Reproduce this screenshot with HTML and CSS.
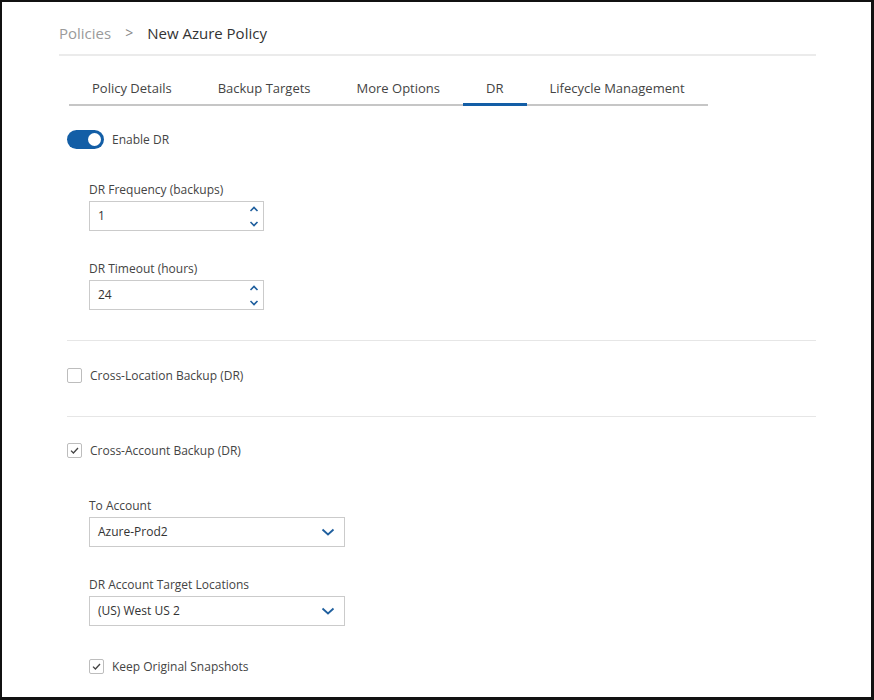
FILE: index.html
```html
<!DOCTYPE html>
<html>
<head>
<meta charset="utf-8">
<link rel="stylesheet" href="styles.css">
</head>
<body>
<div class="frame">
  <div class="breadcrumb">
    <span class="crumb-parent">Policies</span>
    <span class="crumb-sep">&gt;</span>
    <span class="crumb-current">New Azure Policy</span>
  </div>

  <div class="tabs">
    <div class="tab">Policy Details</div>
    <div class="tab">Backup Targets</div>
    <div class="tab">More Options</div>
    <div class="tab active">DR</div>
    <div class="tab">Lifecycle Management</div>
  </div>

  <div class="content">
    <div class="section first">
      <div class="toggle-row">
        <span class="toggle"><span class="knob"></span></span>
        <span class="toggle-label">Enable DR</span>
      </div>
      <div class="fields">
        <div class="field">
          <div class="label">DR Frequency (backups)</div>
          <div class="box number">
            <span class="value">1</span>
            <span class="spin">
              <svg width="10" height="6" viewBox="0 0 10 6"><path d="M1.5 5 L5 1.5 L8.5 5" fill="none" stroke="#1f5f9e" stroke-width="1.6"/></svg>
              <svg width="10" height="6" viewBox="0 0 10 6"><path d="M1.5 1 L5 4.5 L8.5 1" fill="none" stroke="#1f5f9e" stroke-width="1.6"/></svg>
            </span>
          </div>
        </div>
        <div class="field">
          <div class="label">DR Timeout (hours)</div>
          <div class="box number">
            <span class="value">24</span>
            <span class="spin">
              <svg width="10" height="6" viewBox="0 0 10 6"><path d="M1.5 5 L5 1.5 L8.5 5" fill="none" stroke="#1f5f9e" stroke-width="1.6"/></svg>
              <svg width="10" height="6" viewBox="0 0 10 6"><path d="M1.5 1 L5 4.5 L8.5 1" fill="none" stroke="#1f5f9e" stroke-width="1.6"/></svg>
            </span>
          </div>
        </div>
      </div>
    </div>

    <div class="section check-section">
      <div class="check-row">
        <span class="checkbox"></span>
        <span class="check-label">Cross-Location Backup (DR)</span>
      </div>
    </div>

    <div class="section last">
      <div class="check-row">
        <span class="checkbox checked">
          <svg width="11" height="11" viewBox="0 0 11 11"><path d="M2 5.6 L4.4 8 L9 3" fill="none" stroke="#444" stroke-width="1.3"/></svg>
        </span>
        <span class="check-label">Cross-Account Backup (DR)</span>
      </div>
      <div class="fields account-fields">
        <div class="field">
          <div class="label">To Account</div>
          <div class="box select">
            <span class="value">Azure-Prod2</span>
            <svg width="14" height="8" viewBox="0 0 14 8"><path d="M1.5 1.5 L7 6.5 L12.5 1.5" fill="none" stroke="#1f5f9e" stroke-width="1.8"/></svg>
          </div>
        </div>
        <div class="field">
          <div class="label">DR Account Target Locations</div>
          <div class="box select">
            <span class="value">(US) West US 2</span>
            <svg width="14" height="8" viewBox="0 0 14 8"><path d="M1.5 1.5 L7 6.5 L12.5 1.5" fill="none" stroke="#1f5f9e" stroke-width="1.8"/></svg>
          </div>
        </div>
        <div class="check-row keep">
          <span class="checkbox checked">
            <svg width="11" height="11" viewBox="0 0 11 11"><path d="M2 5.6 L4.4 8 L9 3" fill="none" stroke="#444" stroke-width="1.3"/></svg>
          </span>
          <span class="check-label">Keep Original Snapshots</span>
        </div>
      </div>
    </div>
  </div>
</div>
</body>
</html>
```

FILE: styles.css
```css
html, body {
  margin: 0;
  padding: 0;
  background: #fff;
}

body {
  font-family: "Open Sans", "Noto Sans", sans-serif;
  font-size: 12px;
  color: #444;
}

.frame {
  box-sizing: border-box;
  width: 874px;
  height: 700px;
  border: 2px solid #111;
  border-right-width: 3px;
  border-bottom-width: 3px;
  padding: 0 55px 0 57px;
  overflow: hidden;
}

.breadcrumb {
  display: flex;
  align-items: center;
  height: 22px;
  padding-top: 20px;
  padding-bottom: 10px;
  border-bottom: 2px solid #ebebeb;
  font-size: 15px;
  line-height: 22px;
}

.crumb-parent {
  color: #9a9a9a;
}

.crumb-sep {
  color: #888;
  margin: 0 14px 0 14px;
  font-size: 14px;
}

.crumb-current {
  color: #333;
}

.tabs {
  display: inline-flex;
  margin-left: 10px;
  border-bottom: 2px solid #c6c6c6;
  font-size: 13px;
}

.tab {
  padding: 23px 23px 6px;
  line-height: 18px;
  color: #444;
  border-bottom: 3px solid transparent;
  margin-bottom: -2px;
}

.tab.active {
  border-bottom-color: #135ea6;
}

.content {
  padding-left: 8px;
}

.section {
  border-bottom: 1px solid #e6e6e6;
}

.section.first {
  padding-top: 24px;
  padding-bottom: 30px;
}

.section.check-section {
  padding: 26px 0 33px;
}

.section.last {
  border-bottom: none;
  padding-top: 25px;
}

.toggle-row {
  display: flex;
  align-items: center;
  height: 19px;
}

.toggle {
  position: relative;
  display: inline-block;
  width: 37px;
  height: 19px;
  border-radius: 10px;
  background: #135ea6;
}

.knob {
  position: absolute;
  top: 3px;
  right: 3px;
  width: 13px;
  height: 13px;
  border-radius: 50%;
  background: #fff;
}

.toggle-label {
  margin-left: 8px;
  color: #444;
  line-height: 18px;
}

.fields {
  padding-left: 22px;
  padding-top: 31px;
  display: flex;
  flex-direction: column;
  gap: 28px;
}

.account-fields {
  padding-top: 38px;
}

.field {
  display: flex;
  flex-direction: column;
  gap: 2px;
}

.label {
  padding-top: 1px;
  line-height: 18px;
  color: #444;
}

.box {
  box-sizing: border-box;
  height: 30px;
  border: 1px solid #cbcbcb;
  display: flex;
  align-items: center;
  justify-content: space-between;
  color: #333;
}

.box .value {
  padding-left: 8px;
  line-height: 18px;
}

.box.number {
  width: 175px;
  padding-right: 4px;
}

.spin {
  display: flex;
  flex-direction: column;
  gap: 9px;
}

.spin svg {
  display: block;
}

.box.select {
  width: 256px;
  padding-right: 9px;
}

.box.select svg {
  display: block;
}

.check-row {
  display: flex;
  align-items: center;
  height: 16px;
}

.checkbox {
  box-sizing: border-box;
  width: 15px;
  height: 15px;
  border: 1px solid #bdbdbd;
  border-radius: 2px;
  display: flex;
  align-items: center;
  justify-content: center;
  background: #fff;
}

.checkbox svg {
  display: block;
}

.check-label {
  margin-left: 8px;
  padding-top: 2px;
  line-height: 18px;
  color: #444;
}

.check-row.keep {
  margin-top: 4px;
}
```
